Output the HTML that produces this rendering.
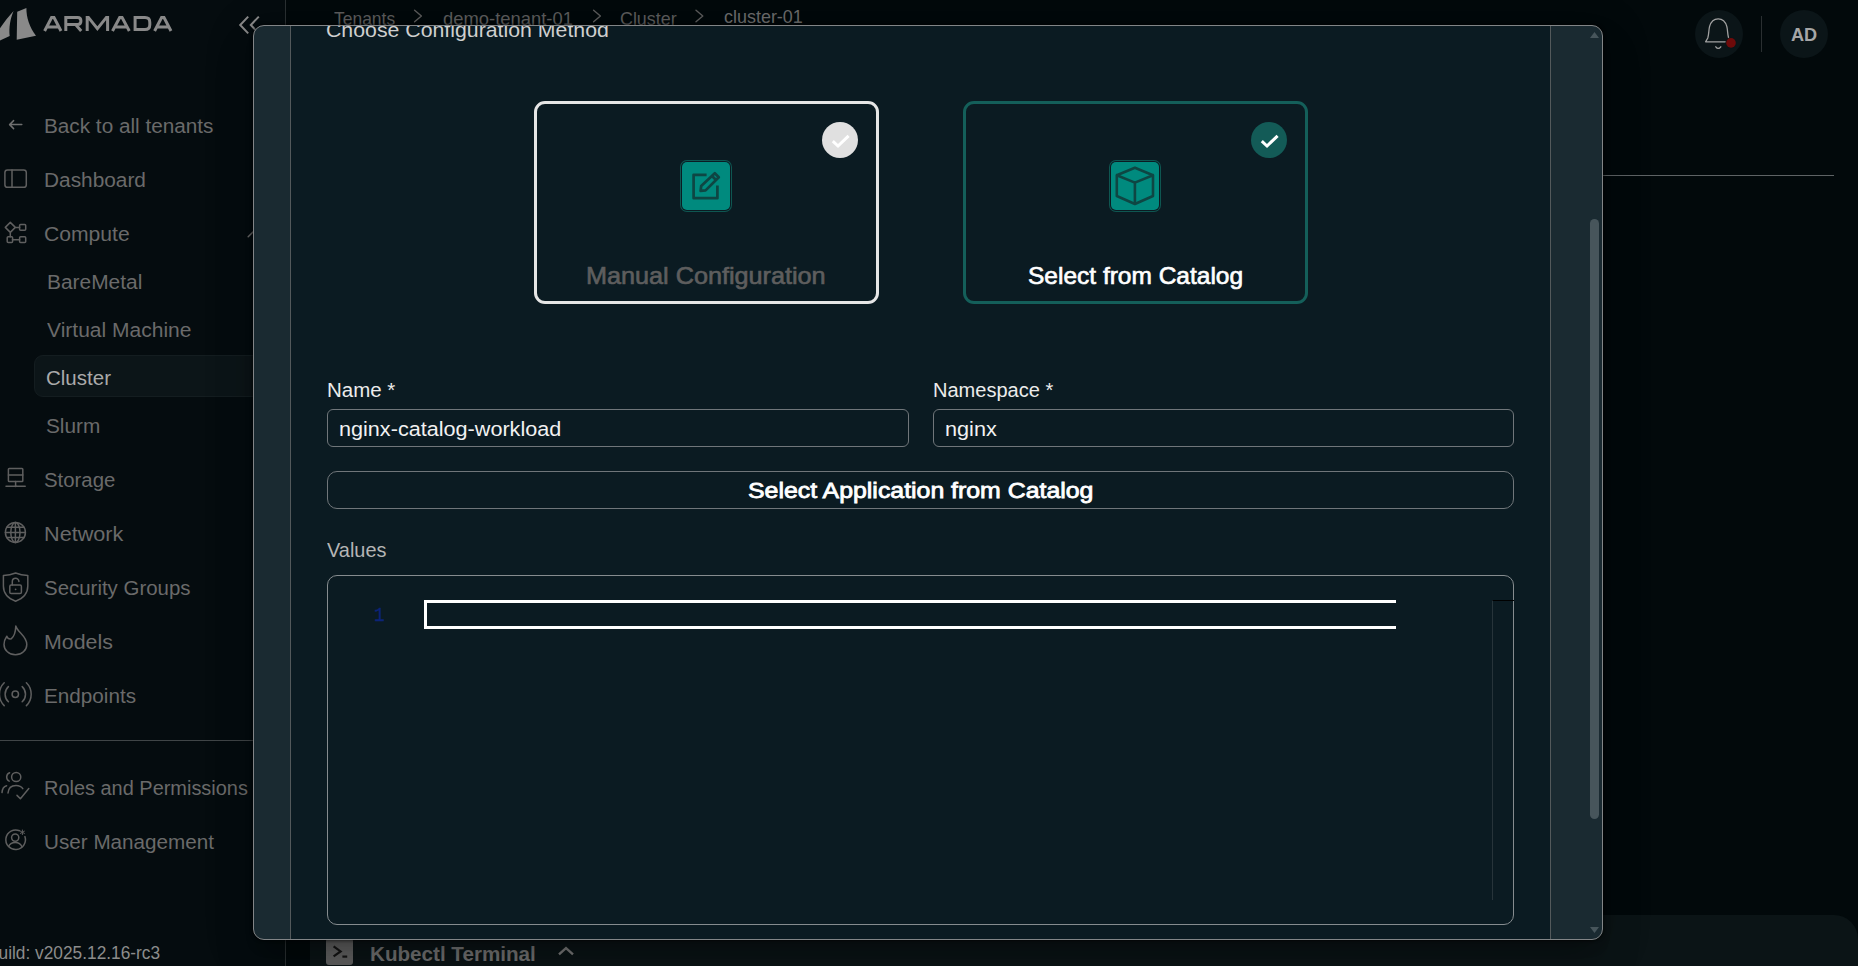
<!DOCTYPE html>
<html lang="en"><head><meta charset="utf-8"><title>Armada - cluster-01</title>
<style>
*{box-sizing:border-box;margin:0;padding:0}
html,body{width:1858px;height:966px;overflow:hidden;background:#02090b}
body{font-family:"Liberation Sans",sans-serif;color:#ddd}
#app{position:relative;width:1858px;height:966px;overflow:hidden}
.tx{position:absolute;white-space:nowrap;transform-origin:0 0;display:block}
svg.ov{position:absolute;left:0;top:0;overflow:visible}
#main{position:absolute;left:0;top:0;width:1858px;height:966px;background:#02090b;overflow:hidden}
#sidebar{position:absolute;left:0;top:0;width:286px;height:966px;background:#050c0f;border-right:1px solid #2a3032;overflow:hidden;z-index:1}
#sidebar .pill{position:absolute;left:34px;top:355px;width:240px;height:42px;border-radius:9px;background:#0c1518;border:1px solid #141d20}
#sidebar .divider{position:absolute;left:0;top:740px;width:286px;height:1px;background:#404547}
.hline{position:absolute;left:1603px;top:175px;width:231px;height:1px;background:#5e6365}
.bellc,.avc{position:absolute;top:10px;width:48px;height:48px;border-radius:50%;background:#0b1518}
.bellc{left:1695px}.avc{left:1780px}
.vdiv{position:absolute;left:1761px;top:16px;width:1px;height:36px;background:#2a2f31}
#bottombar{position:absolute;left:310px;top:915px;width:1548px;height:51px;border-radius:24px 24px 0 0;background:#0b1416}
.termicon{position:absolute;left:16px;top:23px;width:27px;height:27px;border-radius:3px;background:#626262}
#modal{position:absolute;left:0;top:0;width:1858px;height:966px;z-index:2}
#frame{position:absolute;left:253px;top:25px;width:1350px;height:915px;border:1px solid #828587;border-radius:11px;background:#1a2a31;box-shadow:0 11px 15px -7px rgba(0,0,0,.2),0 24px 38px 3px rgba(0,0,0,.14),0 9px 46px 8px rgba(0,0,0,.12),0 0 3px 1px rgba(0,0,0,.5)}
#mclip{position:absolute;left:0;top:0;width:1858px;height:966px;clip-path:inset(26px 256px 27px 254px)}
#panel{position:absolute;left:290px;top:20px;width:1261px;height:930px;background:#0b1b22;border-left:1px solid #53595b;border-right:1px solid #53595b}
.card{position:absolute;top:101px;width:345px;height:203px;border-radius:11px;border:3px solid #e6e6e6}
.card.c1{left:534px}.card.c2{left:963px;border-color:#145f5a}
.ibox{position:absolute;left:145px;top:58px;width:48px;height:48px;border-radius:5px;background:#008a7e;box-shadow:0 0 0 1px #0b1b22,0 0 0 2px #0e5651}
.chk{position:absolute;left:285px;top:18px;width:36px;height:36px;border-radius:50%;background:#e0e0e0}
.c2 .chk{background:#135b57}
.inp{position:absolute;top:409px;height:38px;border:1px solid #70767a;border-radius:6px}
.inp.i1{left:327px;width:582px}.inp.i2{left:933px;width:581px}
.btn{position:absolute;left:327px;top:471px;width:1187px;height:38px;border:1px solid #70767a;border-radius:10px}
.editor{position:absolute;left:327px;top:575px;width:1187px;height:350px;border:1px solid #868c8f;border-radius:10px}
.curline{position:absolute;left:96px;top:24px;width:972px;height:29px;border:3px solid #fff;border-right:none}
.ruler{position:absolute;left:1164px;top:24px;width:22px;height:300px;border-left:1px solid #27343a;border-top:1px solid #000}
.sb-thumb{position:absolute;left:1590px;top:219px;width:9px;height:600px;border-radius:4.5px;background:#47555b}

</style></head>
<body>
<div id="app">
  <aside id="sidebar">
    <div class="pill"></div>
    <div class="divider"></div>
<svg class="ov" width="286" height="966" viewBox="0 0 286 966" fill="none" stroke="#5f5f5f" stroke-width="1.5" stroke-linecap="round" stroke-linejoin="round">
  <!-- logo -->
  <g fill="#898989" stroke="none">
    <path d="M13.6 10.9 C9.2 15.6 3.6 22.6 0 28.2 L0 40.6 L9.7 36 C8.8 27.5 10.2 18.5 13.6 10.9 Z"/>
    <path d="M17.2 11.8 L26.4 8.1 C26.3 17.5 29.6 27.6 36 35.7 L16.7 39.7 Z"/>
  </g>
  <g stroke="#898989" stroke-width="3" stroke-linecap="butt" stroke-linejoin="miter" fill="none">
    <path d="M44.6 31 L51.6 17.6 L54 17.6 L61 31 M47.6 27 L58 27"/>
    <path d="M65.8 31 L65.8 17.6 L77.6 17.6 Q80.9 17.6 80.9 21.1 Q80.9 24.6 77.6 24.6 L65.8 24.6 M75.6 24.6 L81.2 31"/>
    <path d="M87.2 31 L87.2 17.4 L88.4 17.4 L97.4 28.6 L106.4 17.4 L107.6 17.4 L107.6 31"/>
    <path d="M112.5 31 L119.7 17.6 L122.1 17.6 L129.3 31 M115.7 27 L126.1 27"/>
    <path d="M135.1 31 L135.1 17.6 L145 17.6 Q149.8 17.6 149.8 22.4 L149.8 24.8 Q149.8 29.6 145 29.6 L135.1 29.6"/>
    <path d="M154.6 31 L161.6 17.6 L164 17.6 L171 31 M157.6 27 L168 27"/>
  </g>
  <!-- collapse chevrons -->
  <g stroke="#8a8a8a" stroke-width="2" stroke-linecap="butt" stroke-linejoin="miter">
    <path d="M248.2 16.6 L240.2 25 L248.2 33.4"/><path d="M258.8 16.6 L250.8 25 L258.8 33.4"/>
  </g>
  <!-- back arrow -->
  <path d="M9.6 124.6 H21.8 M13.6 120.6 L9.6 124.6 L13.6 128.6" stroke="#6f6f6f"/>
  <!-- dashboard -->
  <rect x="4.9" y="169.9" width="21.4" height="17.4" rx="2.6"/><path d="M12 169.9 V187.3"/>
  <!-- compute -->
  <path d="M10.3 222.4 L15.3 227.4 L10.3 232.4 L5.3 227.4 Z M15.3 227.4 H19.6 M10.3 232.4 V236.8 M12.4 239.7 H19.6"/>
  <rect x="19.6" y="224.4" width="6.1" height="5.9" rx="1"/><rect x="7.2" y="236.8" width="5.4" height="5.8" rx="1"/><rect x="19.6" y="236.8" width="6.1" height="5.8" rx="1"/>
  <!-- compute chevron -->
  <path d="M248.2 236.8 L254 231 L259.8 236.8" stroke="#6a6a6a" stroke-width="1.5"/>
  <!-- storage -->
  <rect x="8.4" y="468.4" width="14.4" height="13.1" rx="0.8"/><path d="M8.4 474.9 H22.8 M15.6 481.5 V486.2 M6 486.2 H25.2"/><circle cx="15.6" cy="486.2" r="1" fill="#5f5f5f" stroke="none"/>
  <!-- network -->
  <circle cx="15.4" cy="532.4" r="10"/><ellipse cx="15.4" cy="532.4" rx="4.6" ry="10"/><path d="M15.4 522.4 V542.4 M5.4 532.4 H25.4 M6.8 527.3 H24 M6.8 537.5 H24"/>
  <!-- security -->
  <path d="M15.6 573 C11 575 7 575.4 3.4 575.4 V586 C3.4 593.6 8.6 598.6 15.6 601.2 C22.6 598.6 27.8 593.6 27.8 586 V575.4 C24.2 575.4 20.2 575 15.6 573 Z"/>
  <rect x="9.8" y="585" width="11.6" height="8.6" rx="1.4"/><path d="M12.3 585 V581.6 A3.3 3.3 0 0 1 18.9 581.6"/><circle cx="15.6" cy="589.3" r="0.9" fill="#5f5f5f" stroke="none"/>
  <!-- models (flame) -->
  <path d="M15.8 626 C17.2 632 26.8 636 26.8 644.4 A11.4 10.4 0 0 1 4 644.4 C4 641 5.4 638.2 6.8 636.2 C7.6 638.2 9.4 639.2 11.2 638.8 C14.6 636.4 15.6 631 15.8 626 Z"/>
  <!-- endpoints -->
  <circle cx="15.3" cy="694.2" r="3.2"/>
  <path d="M8.4 686.6 A10.4 10.4 0 0 0 8.4 701.8 M22.2 686.6 A10.4 10.4 0 0 1 22.2 701.8 M4.2 682.8 A16 16 0 0 0 4.2 705.6 M26.4 682.8 A16 16 0 0 1 26.4 705.6"/>
  <!-- roles -->
  <circle cx="16.2" cy="777" r="4.6"/><path d="M9.6 772.8 A4.6 4.6 0 0 0 9.2 781.2 M8 793 C8.4 787.6 11.6 785.4 16 785.4 C19 785.4 21.4 786.4 22.8 788.6 M2 792.6 C2.2 789 4 786.6 6.6 785.8 M17 795.4 L20.4 798.8 L28.8 788.6"/>
  <!-- user mgmt -->
  <path d="M19.6 830.8 A9.8 9.8 0 1 0 24.9 836.6"/><circle cx="15.2" cy="837.6" r="3.6"/><path d="M8.6 846.6 C9.6 843.6 12 842.4 15.2 842.4 C18.4 842.4 20.8 843.6 21.8 846.6"/>
  <path d="M22.4 830 V834.6 M20.4 831.2 L24.4 833.4 M24.4 831.2 L20.4 833.4" stroke-width="1"/>
</svg>
<span id="t_back" class="tx" style="left:43.96px;top:115.77px;font:400 20px/20px 'Liberation Sans',sans-serif;color:#6a6a6a;transform:scaleX(1.0370);">Back to all tenants</span>
<span id="t_dash" class="tx" style="left:43.66px;top:169.77px;font:400 20px/20px 'Liberation Sans',sans-serif;color:#6a6a6a;transform:scaleX(1.0417);">Dashboard</span>
<span id="t_comp" class="tx" style="left:43.64px;top:223.77px;font:400 20px/20px 'Liberation Sans',sans-serif;color:#6a6a6a;transform:scaleX(1.0562);">Compute</span>
<span id="t_bare" class="tx" style="left:46.55px;top:271.77px;font:400 20px/20px 'Liberation Sans',sans-serif;color:#6a6a6a;transform:scaleX(1.0461);">BareMetal</span>
<span id="t_vm" class="tx" style="left:47.40px;top:319.77px;font:400 20px/20px 'Liberation Sans',sans-serif;color:#6a6a6a;transform:scaleX(1.0511);">Virtual Machine</span>
<span id="t_clus" class="tx" style="left:46.37px;top:367.77px;font:400 20px/20px 'Liberation Sans',sans-serif;color:#aaaaaa;transform:scaleX(1.0258);">Cluster</span>
<span id="t_slurm" class="tx" style="left:46.36px;top:415.77px;font:400 20px/20px 'Liberation Sans',sans-serif;color:#6a6a6a;transform:scaleX(1.0400);">Slurm</span>
<span id="t_stor" class="tx" style="left:43.68px;top:469.77px;font:400 20px/20px 'Liberation Sans',sans-serif;color:#6a6a6a;transform:scaleX(1.0188);">Storage</span>
<span id="t_net" class="tx" style="left:43.62px;top:523.77px;font:400 20px/20px 'Liberation Sans',sans-serif;color:#6a6a6a;transform:scaleX(1.0819);">Network</span>
<span id="t_sec" class="tx" style="left:43.68px;top:577.77px;font:400 20px/20px 'Liberation Sans',sans-serif;color:#6a6a6a;transform:scaleX(1.0218);">Security Groups</span>
<span id="t_mod" class="tx" style="left:43.63px;top:631.77px;font:400 20px/20px 'Liberation Sans',sans-serif;color:#6a6a6a;transform:scaleX(1.0683);">Models</span>
<span id="t_end" class="tx" style="left:43.66px;top:685.77px;font:400 20px/20px 'Liberation Sans',sans-serif;color:#6a6a6a;transform:scaleX(1.0352);">Endpoints</span>
<span id="t_roles" class="tx" style="left:44.00px;top:777.77px;font:400 20px/20px 'Liberation Sans',sans-serif;color:#6a6a6a;transform:scaleX(0.9970);">Roles and Permissions</span>
<span id="t_user" class="tx" style="left:43.87px;top:831.77px;font:400 20px/20px 'Liberation Sans',sans-serif;color:#6a6a6a;transform:scaleX(1.0335);">User Management</span>
<span id="t_build" class="tx" style="left:-13.49px;top:944.89px;font:400 17.5px/17.5px 'Liberation Sans',sans-serif;color:#8c8c8c;transform:scaleX(0.9885);">Build: v2025.12.16-rc3</span>
  </aside>
  <main id="main">
    <div class="hline"></div>
    <div class="bellc"></div><div class="vdiv"></div><div class="avc"></div>
    <div id="bottombar"><div class="termicon"></div></div>
<svg class="ov" width="1858" height="966" viewBox="0 0 1858 966" fill="none" stroke-linecap="round" stroke-linejoin="round">
  <!-- breadcrumb chevrons -->
  <g stroke="#5c5c5c" stroke-width="1.4">
    <path d="M414.6 10.2 L421.4 16 L414.6 21.8"/><path d="M593.6 10.2 L600.4 16 L593.6 21.8"/><path d="M696 10.2 L702.8 16 L696 21.8"/>
  </g>
  <!-- bell -->
  <path d="M1705.6 41.8 H1730.4 L1728.6 38 C1727.4 34 1727.800 30 1726.800 26.4 C1725.4 21.4 1722.4 18.800 1718.2 18.800 C1714 18.800 1711 21.4 1709.600 26.4 C1708.600 30 1709 34 1707.800 38 Z" stroke="#a2a2a2" stroke-width="1.3"/>
  <path d="M1715.800 46.800 Q1718.2 50 1720.800 46.800" stroke="#a2a2a2" stroke-width="1.3"/>
  <circle cx="1731" cy="42.900" r="5.600" fill="#0b1518" stroke="none"/><circle cx="1731" cy="42.900" r="4.800" fill="#6e0a0a" stroke="none"/>
  <!-- terminal glyph -->
  <path d="M333.6 946.4 L340.6 951.4 L333.6 956.4" stroke="#161616" stroke-width="2.2" stroke-linecap="butt" stroke-linejoin="miter"/>
  <path d="M342.4 956.6 H347.2" stroke="#161616" stroke-width="2.2" stroke-linecap="butt"/>
  <!-- caret -->
  <path d="M559 954.4 L566 948.2 L573 954.4" stroke="#777" stroke-width="2.4" stroke-linecap="butt" stroke-linejoin="miter"/>
</svg>
<span id="b_ten" class="tx" style="left:334.00px;top:9.84px;font:400 18.5px/18.5px 'Liberation Sans',sans-serif;color:#5c5c5c;transform:scaleX(0.9437);">Tenants</span>
<span id="b_demo" class="tx" style="left:442.51px;top:9.84px;font:400 18.5px/18.5px 'Liberation Sans',sans-serif;color:#5c5c5c;transform:scaleX(0.9946);">demo-tenant-01</span>
<span id="b_clus" class="tx" style="left:620.03px;top:9.84px;font:400 18.5px/18.5px 'Liberation Sans',sans-serif;color:#5c5c5c;transform:scaleX(0.9655);">Cluster</span>
<span id="b_c01" class="tx" style="left:724.03px;top:7.84px;font:400 18.5px/18.5px 'Liberation Sans',sans-serif;color:#6c6c6c;transform:scaleX(0.9700);">cluster-01</span>
<span id="t_ad" class="tx" style="left:1791.00px;top:25.76px;font:700 18px/18px 'Liberation Sans',sans-serif;color:#a6a6a6;transform:scaleX(1.0077);">AD</span>
<span id="t_kube" class="tx" style="left:369.97px;top:943.77px;font:700 20px/20px 'Liberation Sans',sans-serif;color:#717171;transform:scaleX(1.0314);">Kubectl Terminal</span>
  </main>
  <div id="modal">
    <div id="frame"></div>
    <div id="mclip">
    <div id="panel"></div>
    <div class="card c1"><div class="ibox"></div><div class="chk"></div></div>
    <div class="card c2"><div class="ibox"></div><div class="chk"></div></div>
    <div class="inp i1"></div><div class="inp i2"></div>
    <div class="btn"></div>
    <div class="editor"><div class="curline"></div><div class="ruler"></div></div>
    <div class="sb-thumb"></div>
<svg class="ov" width="1858" height="966" viewBox="0 0 1858 966" fill="none" stroke-linecap="round" stroke-linejoin="round">
  <!-- edit icon -->
  <g stroke="#0e4643" stroke-width="2.7" stroke-linecap="butt" stroke-linejoin="round">
    <path d="M706.6 174.800 H693.6 V198.2 H717.4 V185.6"/>
    <path d="M714.8 173.2 L718.8 177.2 L705.6 190.4 L700.6 190.8 L701.2 186 Z M712 176 L716 180"/>
  </g>
  <!-- cube icon -->
  <g stroke="#0e4643" stroke-width="2.6" stroke-linejoin="round">
    <path d="M1134.9 167.8 L1153 175.2 V196 L1134.9 204 L1116.8 196 V175.2 Z M1116.8 175.2 L1134.9 182.6 L1153 175.2 M1134.9 182.6 V204"/>
  </g>
  <!-- checks -->
  <path d="M832.8 141.2 L838 146 L848.6 135.800" stroke="#ffffff" stroke-width="3" stroke-linecap="butt" stroke-linejoin="miter"/>
  <path d="M1261.8 141.2 L1267 146 L1277.600 135.800" stroke="#ffffff" stroke-width="3" stroke-linecap="butt" stroke-linejoin="miter"/>
  <!-- scrollbar arrows -->
  <path d="M1594.500 32 L1599 38 H1590 Z" fill="#47555b" stroke="none"/>
  <path d="M1594.500 933 L1599 927 H1590 Z" fill="#47555b" stroke="none"/>
</svg>
<span id="m_title" class="tx" style="left:326.19px;top:18.72px;font:400 21px/21px 'Liberation Sans',sans-serif;color:#cfcfcf;transform:scaleX(1.0137);">Choose Configuration Method</span>
<span id="m_manual" class="tx" style="left:586.35px;top:263.68px;font:700 24px/24px 'Liberation Sans',sans-serif;color:#5e5e5e;transform:scaleX(1.0504);font-weight:400;-webkit-text-stroke:0.65px #5e5e5e;">Manual Configuration</span>
<span id="m_catalog" class="tx" style="left:1027.58px;top:263.68px;font:700 24px/24px 'Liberation Sans',sans-serif;color:#ffffff;transform:scaleX(1.0206);font-weight:400;-webkit-text-stroke:0.65px #fff;">Select from Catalog</span>
<span id="m_name" class="tx" style="left:327.28px;top:380.17px;font:400 20px/20px 'Liberation Sans',sans-serif;color:#ececec;transform:scaleX(1.0246);">Name *</span>
<span id="m_ns" class="tx" style="left:932.80px;top:380.17px;font:400 20px/20px 'Liberation Sans',sans-serif;color:#ececec;transform:scaleX(1.0017);">Namespace *</span>
<span id="m_nameval" class="tx" style="left:339.25px;top:418.95px;font:400 20.5px/20.5px 'Liberation Sans',sans-serif;color:#f2f2f2;transform:scaleX(1.0545);">nginx-catalog-workload</span>
<span id="m_nsval" class="tx" style="left:944.74px;top:418.95px;font:400 20.5px/20.5px 'Liberation Sans',sans-serif;color:#f2f2f2;transform:scaleX(1.0563);">nginx</span>
<span id="m_btn" class="tx" style="left:748.40px;top:480.28px;font:700 22px/22px 'Liberation Sans',sans-serif;color:#ffffff;transform:scaleX(1.1298);font-weight:400;-webkit-text-stroke:0.8px #fff;">Select Application from Catalog</span>
<span id="m_values" class="tx" style="left:327.20px;top:539.32px;font:400 21px/21px 'Liberation Sans',sans-serif;color:#b5b5b5;transform:scaleX(0.9484);">Values</span>
<span id="m_ln" class="tx" style="left:373.79px;top:606.89px;font:400 19.5px/19.5px 'Liberation Mono',sans-serif;color:#0c2478;transform:scaleX(0.9100);-webkit-text-stroke:0.35px #0c2478;">1</span>
    </div>
  </div>
</div>
</body></html>
